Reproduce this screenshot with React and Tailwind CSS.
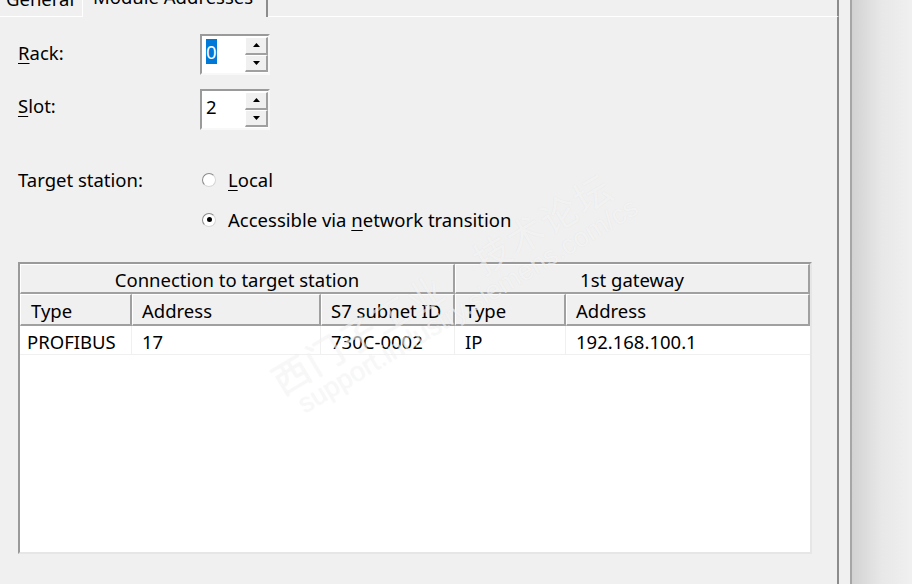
import React from "react";

function Arrow({ up }) {
  return (
    <svg width="7" height="4" viewBox="0 0 7 4" className="block">
      {up ? <path d="M3.5 0 L7 4 L0 4 Z" fill="#000" /> : <path d="M0 0 L7 0 L3.5 4 Z" fill="#000" />}
    </svg>
  );
}

function Spin({ value, selected }) {
  return (
    <div className="w-[70px] h-[41px] flex bg-white border-2 border-t-[#9a9a9a] border-l-[#9a9a9a] border-r-[#f8f8f8] border-b-[#f8f8f8]">
      <div className="flex-1 pl-[4px] pt-[3px] leading-[25px]">
        {selected ? (
          <span className="bg-[#0078d7] text-white inline-block h-[25px]">{value}</span>
        ) : (
          <span>{value}</span>
        )}
      </div>
      <div className="w-[23px] flex flex-col pt-[1px] pb-[1px]">
        <div className="h-[18px] bg-[#f0f0f0] border-t border-l border-white border-r-2 border-b-2 border-r-[#a0a0a0] border-b-[#a0a0a0] flex items-center justify-center">
          <Arrow up />
        </div>
        <div className="h-[18px] bg-[#f0f0f0] border-t border-l border-white border-r-2 border-b-2 border-r-[#a0a0a0] border-b-[#a0a0a0] flex items-center justify-center">
          <Arrow />
        </div>
      </div>
    </div>
  );
}

function Radio({ checked }) {
  return (
    <div className="w-[14px] h-[14px] rounded-full border border-t-[#8a8a8a] border-l-[#8a8a8a] border-r-[#d6d6d6] border-b-[#d6d6d6] bg-white flex items-center justify-center">
      {checked && <div className="w-[5px] h-[5px] rounded-full bg-black" />}
    </div>
  );
}

const HC =
  "bg-[#f0f0f0] border-t border-l border-white border-r-2 border-b-2 border-r-[#a0a0a0] border-b-[#a0a0a0] flex items-center";
const DC = "border-r border-[#f0f0f0] flex items-center";

export default function App() {
  return (
    <div className="w-[912px] h-[584px] bg-[#f0f0f0] flex overflow-hidden relative font-['Noto_Sans',sans-serif] text-[18.5px] leading-[25px] text-black">
      {/* dialog */}
      <div className="w-[839px] flex flex-col">
        {/* tab strip */}
        <div className="h-[17px] flex">
          <div className="w-[82px] border-b border-white pl-[6px]">
            <div className="-mt-[14px] leading-[25px]">General</div>
          </div>
          <div className="w-[186px] border-l border-white border-r-2 border-r-[#8c8c8c] pl-[10px]">
            <div className="-mt-[16px] leading-[25px]">Module Addresses</div>
          </div>
          <div className="flex-1 border-b border-white border-r-2 border-r-[#8c8c8c]" />
        </div>
        {/* panel */}
        <div className="flex-1 border-r-2 border-[#8c8c8c] pl-[18px] flex flex-col">
          <div className="mt-[17px] flex items-start">
            <div className="w-[182px] mt-[6px]">
              <span className="underline underline-offset-[3px] decoration-1">R</span>ack:
            </div>
            <Spin value="0" selected />
          </div>
          <div className="mt-[14px] flex items-start">
            <div className="w-[182px] mt-[4px]">
              <span className="underline underline-offset-[3px] decoration-1">S</span>lot:
            </div>
            <Spin value="2" />
          </div>
          <div className="mt-[37px] flex items-start">
            <div className="w-[184px]">Target station:</div>
            <div className="flex flex-col gap-[15px]">
              <div className="flex items-center h-[25px]">
                <Radio />
                <span className="ml-[12px]">
                  <span className="underline underline-offset-[3px] decoration-1">L</span>ocal
                </span>
              </div>
              <div className="flex items-center h-[25px]">
                <Radio checked />
                <span className="ml-[12px]">
                  Accessible via <span className="underline underline-offset-[3px] decoration-1">n</span>etwork transition
                </span>
              </div>
            </div>
          </div>
          {/* table */}
          <div className="mt-[30px] w-[794px] h-[292px] bg-white border-2 border-t-[#9a9a9a] border-l-[#9a9a9a] border-r-[#e6e6e6] border-b-[#e6e6e6] flex flex-col">
            <div className="flex h-[30px]">
              <div className={HC + " w-[435px] justify-center pt-[2px]"}>Connection to target station</div>
              <div className={HC + " w-[355px] justify-center pt-[2px]"}>1st gateway</div>
            </div>
            <div className="flex h-[32px]">
              <div className={HC + " w-[112px] pl-[10px] pt-[2px]"}>Type</div>
              <div className={HC + " w-[189px] pl-[9px] pt-[2px]"}>Address</div>
              <div className={HC + " w-[134px] pl-[9px] pt-[2px]"}>S7 subnet ID</div>
              <div className={HC + " w-[111px] pl-[9px] pt-[2px]"}>Type</div>
              <div className={HC + " w-[244px] pl-[9px] pt-[2px]"}>Address</div>
            </div>
            <div className="flex h-[29px] border-b border-[#f0f0f0]">
              <div className={DC + " w-[112px] pl-[7px] pt-[2px]"}>PROFIBUS</div>
              <div className={DC + " w-[189px] pl-[10px] pt-[2px]"}>17</div>
              <div className={DC + " w-[134px] pl-[10px] pt-[2px]"}>730C-0002</div>
              <div className={DC + " w-[111px] pl-[10px] pt-[2px]"}>IP</div>
              <div className="w-[244px] pl-[10px] pt-[2px] flex items-center">192.168.100.1</div>
            </div>
          </div>
        </div>
      </div>
      {/* right side */}
      <div className="w-[11px]" />
      <div className="w-[2px] bg-[#a6a6a6]" />
      <div className="flex-1 bg-gradient-to-r from-[#d2d2d2] via-[#e8e8e8] to-[#f0f0f0]" />

      {/* watermark */}
      <div className="absolute left-[263px] top-[364px] origin-top-left -rotate-[31deg] whitespace-nowrap text-[37px] leading-[45px] text-white/60 font-['Noto_Sans_CJK_SC',sans-serif] tracking-[2px] [text-shadow:0_0_1px_rgba(0,0,0,0.08)] pointer-events-none">
        西门子工业　技术论坛
      </div>
      <div className="absolute left-[293px] top-[394px] origin-top-left -rotate-[31deg] whitespace-nowrap text-[27px] leading-[28px] text-white/60 font-['Liberation_Sans',sans-serif] [text-shadow:0_0_1px_rgba(0,0,0,0.08)] pointer-events-none">
        support.industry.siemens.com/cs
      </div>
    </div>
  );
}
